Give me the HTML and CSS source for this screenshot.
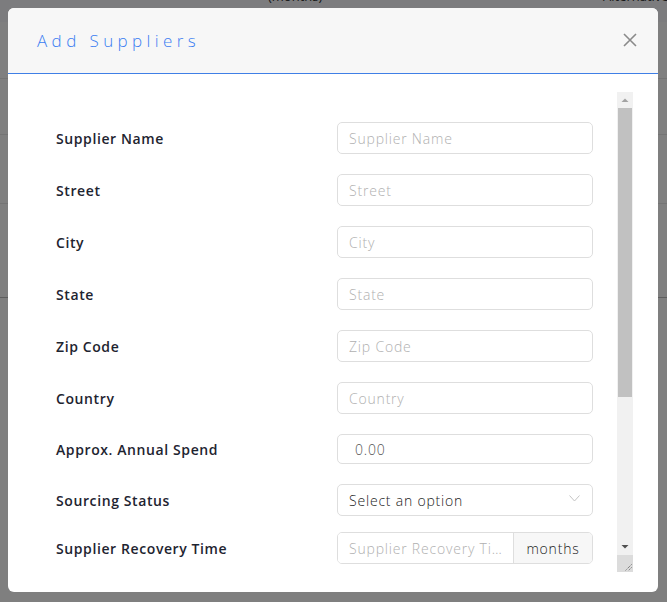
FILE: index.html
```html
<!DOCTYPE html>
<html>
<head>
<meta charset="utf-8">
<link rel="stylesheet" href="styles.css">
</head>
<body>
<div class="page">
  <div class="page-head">
    <span class="ph-col ph-a">(months)</span>
    <span class="ph-col ph-b">Alternative</span>
  </div>
  <div class="page-row r1"></div>
  <div class="page-row r2"></div>
  <div class="page-row r3"></div>
  <div class="page-row r4"></div>
</div>

<div class="overlay">
  <div class="modal">
    <div class="modal-header">
      <h2 class="modal-title">Add Suppliers</h2>
      <button class="close" aria-label="Close">
        <svg width="14" height="14" viewBox="0 0 14 14"><path d="M1 1L13 13M13 1L1 13" stroke="#8a8a8a" stroke-width="1.6" fill="none"/></svg>
      </button>
    </div>
    <div class="modal-body">
      <div class="scrollbox">
        <div class="scroll-content">
          <form class="form">
            <div class="row">
              <label class="lbl">Supplier Name</label>
              <input class="field" placeholder="Supplier Name">
            </div>
            <div class="row">
              <label class="lbl">Street</label>
              <input class="field" placeholder="Street">
            </div>
            <div class="row">
              <label class="lbl">City</label>
              <input class="field" placeholder="City">
            </div>
            <div class="row">
              <label class="lbl">State</label>
              <input class="field" placeholder="State">
            </div>
            <div class="row">
              <label class="lbl">Zip Code</label>
              <input class="field" placeholder="Zip Code">
            </div>
            <div class="row">
              <label class="lbl">Country</label>
              <input class="field" placeholder="Country">
            </div>
            <div class="row">
              <label class="lbl">Approx. Annual Spend</label>
              <input class="field spend" value="0.00">
            </div>
            <div class="row row-select">
              <label class="lbl">Sourcing Status</label>
              <div class="select">
                <span>Select an option</span>
                <svg width="11" height="7" viewBox="0 0 11 7"><path d="M0.5 0.5L5.5 6L10.5 0.5" stroke="#c4c4c4" stroke-width="1" fill="none"/></svg>
              </div>
            </div>
            <div class="row">
              <label class="lbl">Supplier Recovery Time</label>
              <div class="group">
                <input class="group-input" placeholder="Supplier Recovery Time">
                <span class="addon">months</span>
              </div>
            </div>
            <div class="row">
              <label class="lbl">Alternative Suppliers</label>
              <input class="field" placeholder="Alternative Suppliers">
            </div>
          </form>
        </div>
        <div class="vbar" aria-hidden="true">
          <div class="vbar-btn">
            <svg width="16" height="16" viewBox="0 0 16 16"><path d="M4.5 10h7L8 6.5z" fill="#a3a3a3"/></svg>
          </div>
          <div class="vbar-track"><div class="vbar-thumb"></div></div>
          <div class="vbar-btn">
            <svg width="16" height="16" viewBox="0 0 16 16"><path d="M4.5 6h7L8 9.5z" fill="#505050"/></svg>
          </div>
          <div class="vbar-corner">
            <svg width="16" height="17" viewBox="0 0 16 17"><path d="M14.5 9.5L8.5 15.5M14.5 12.5L11.5 15.5" stroke="#555" stroke-width="1" stroke-dasharray="1 1" fill="none"/></svg>
          </div>
        </div>
      </div>
    </div>
  </div>
</div>
</body>
</html>
```

FILE: styles.css
```css
* { box-sizing: border-box; }
html, body { margin: 0; padding: 0; }
body {
  width: 667px;
  height: 602px;
  overflow: hidden;
  background: #fff;
  font-family: "Open Sans", "Liberation Sans", sans-serif;
}
.page { height: 602px; background: #fff; }
.page-head {
  height: 22px;
  background: #f8f9fc;
  position: relative;
  overflow: hidden;
  font-size: 13px;
  color: #333;
}
.ph-col { position: absolute; top: -13px; }
.ph-a { left: 268px; }
.ph-b { left: 603px; }
.page-row { border-bottom: 1px solid #e8e8e8; }
.r1 { height: 57px; }
.r2 { height: 56px; }
.r3 { height: 69px; }
.r4 { height: 94px; border-bottom: 1px solid #bdbdbd; }

.overlay {
  position: fixed;
  inset: 0;
  background: rgba(0, 0, 0, 0.5);
  padding: 8px 9px 10px 8px;
}
.modal {
  width: 650px;
  height: 584px;
  background: #fff;
  border-radius: 6px;
  overflow: hidden;
  display: flex;
  flex-direction: column;
}
.modal-header {
  height: 66px;
  flex: none;
  background: #f7f7f7;
  border-bottom: 1px solid #3f7fe6;
  display: flex;
  align-items: center;
  justify-content: space-between;
  padding: 0 21px 0 29px;
}
.modal-title {
  margin: 0;
  font-weight: 300;
  font-size: 17px;
  letter-spacing: 4.4px;
  color: #3b7ef2;
  font-family: "Open Sans", sans-serif;
}
.close {
  border: 0;
  background: none;
  padding: 0;
  width: 14px;
  height: 14px;
  display: block;
  margin-top: -1px;
}
.close svg { display: block; }
.modal-body {
  flex: 1;
  padding: 18px 25px 20px 25px;
}
.scrollbox {
  height: 480px;
  display: flex;
}
.scroll-content {
  flex: 1;
  min-width: 0;
  overflow: hidden;
}
.vbar {
  width: 16px;
  flex: none;
  display: flex;
  flex-direction: column;
  background: #f1f1f1;
}
.vbar-btn { height: 16px; flex: none; }
.vbar-btn svg, .vbar-corner svg { display: block; }
.vbar-track { flex: 1; }
.vbar-thumb {
  height: 289px;
  margin: 0 1px;
  background: #c1c1c1;
}
.vbar-corner {
  height: 17px;
  flex: none;
  background: #dcdcdc;
}
.form {
  padding: 30px 24px 30px 23px;
}
.row {
  display: grid;
  grid-template-columns: 1fr 256px;
  align-items: center;
  margin-bottom: 20px;
}
.row-select { margin-bottom: 16px; }
.lbl {
  font-weight: 600;
  font-size: 14px;
  letter-spacing: 0.6px;
  color: #1e2430;
}
.field, .select, .group {
  height: 32px;
  border: 1px solid #dedede;
  border-radius: 5px;
  background: #fff;
  font-family: "Open Sans", sans-serif;
  font-size: 14px;
  font-weight: 300;
  letter-spacing: 0.8px;
  color: #333;
}
.field {
  width: 256px;
  padding: 0 11px;
  outline: none;
}
.field::placeholder, .group-input::placeholder { color: #b0b0b0; }
.spend { height: 30px; padding-left: 17px; color: #555; }
.select {
  display: flex;
  align-items: center;
  justify-content: space-between;
  padding: 0 12px 0 11px;
  color: #222;
}
.select svg { margin-top: -4px; }
.group {
  display: flex;
  overflow: hidden;
}
.group-input {
  flex: 1;
  min-width: 0;
  border: 0;
  outline: none;
  padding: 0 11px;
  font: inherit;
  letter-spacing: inherit;
  color: #333;
  text-overflow: ellipsis;
}
.addon {
  width: 79px;
  flex: none;
  background: #f7f7f7;
  border-left: 1px solid #dedede;
  display: flex;
  align-items: center;
  justify-content: center;
  color: #222;
}
```
